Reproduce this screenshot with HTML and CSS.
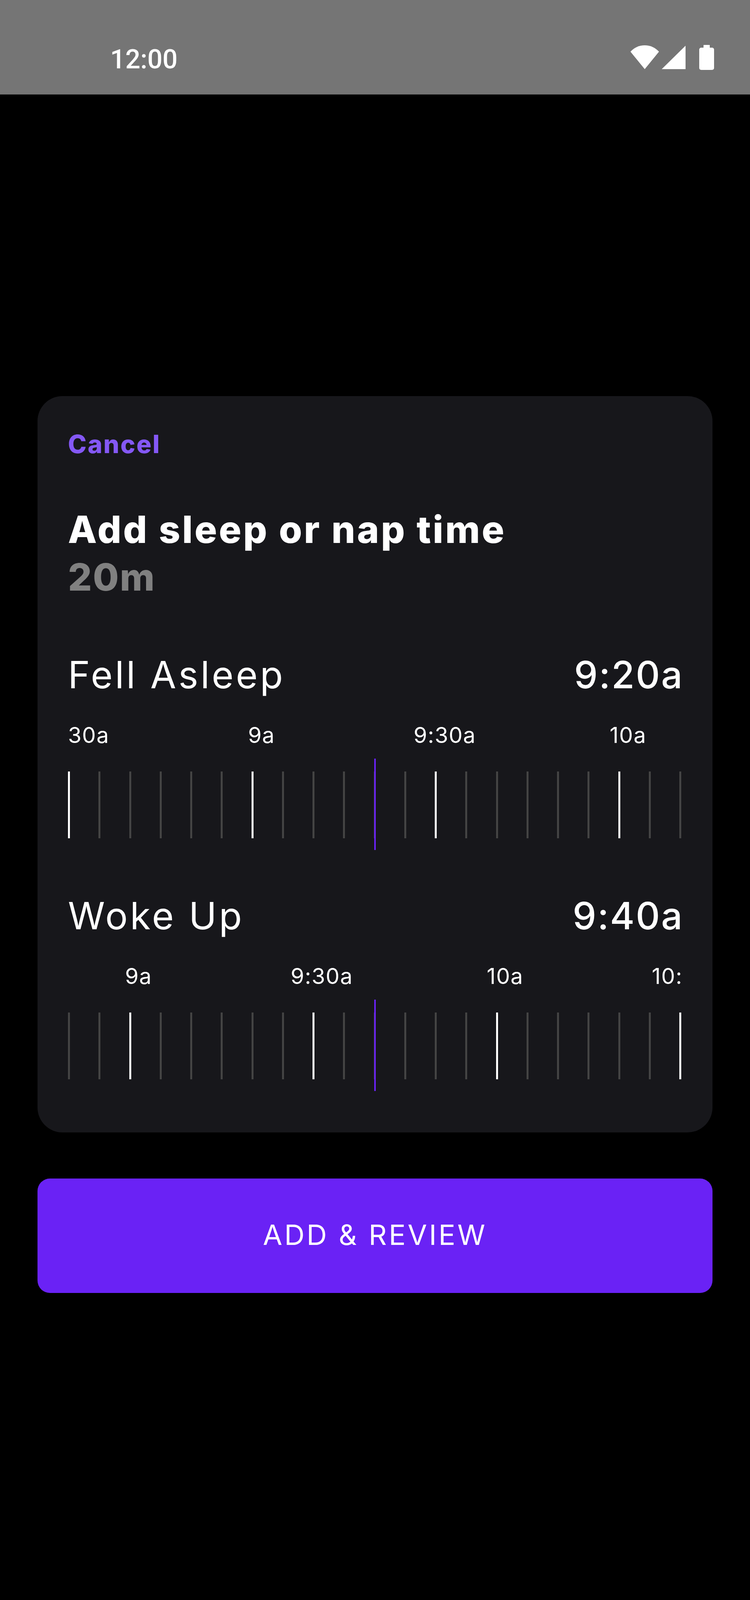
FILE: index.html
```html
<!DOCTYPE html>
<html lang="en">
<head>
<meta charset="utf-8">
<title>Add sleep or nap time</title>
<link rel="stylesheet" href="styles.css">
</head>
<body>
<header class="status">
  <span class="status-time">12:00</span>
  <div class="status-icons">
    <svg class="icon-wifi" width="73" height="65" viewBox="0 0 73 65"><path d="M0 17.3A49 49 0 0 1 73 17.3L36.5 62Z" fill="#fff"/></svg>
    <svg class="icon-signal" width="61" height="65" viewBox="0 0 61 65"><path d="M0 62L61 2V62Z" fill="#fff"/></svg>
    <svg class="icon-battery" width="38" height="65" viewBox="0 0 38 65"><path d="M12 0H26A1 1 0 0 1 27 1V7H33A5 5 0 0 1 38 12V59A5 5 0 0 1 33 64H5A5 5 0 0 1 0 59V12A5 5 0 0 1 5 7H11V1A1 1 0 0 1 12 0Z" fill="#fff"/></svg>
  </div>
</header>
<main class="content">
  <section class="card">
    <a class="cancel">Cancel</a>
    <h1 class="title">Add sleep or nap time</h1>
    <p class="duration">20m</p>

    <div class="section">
      <div class="row-head"><span class="row-name">Fell Asleep</span><span class="row-time">9:20a</span></div>
      <div class="labels labels-a">
        <span class="label label-first">30a</span>
        <span class="label">9a</span>
        <span class="label">9:30a</span>
        <span class="label">10a</span>
      </div>
      <div class="ticks">
        <i class="tick major"></i><i class="tick"></i><i class="tick"></i><i class="tick"></i><i class="tick"></i><i class="tick"></i>
        <i class="tick major"></i><i class="tick"></i><i class="tick"></i><i class="tick"></i><i class="tick"></i><i class="tick"></i>
        <i class="tick major"></i><i class="tick"></i><i class="tick"></i><i class="tick"></i><i class="tick"></i><i class="tick"></i>
        <i class="tick major"></i><i class="tick"></i><i class="tick"></i>
        <b class="needle"></b>
      </div>
    </div>

    <div class="section">
      <div class="row-head"><span class="row-name">Woke Up</span><span class="row-time">9:40a</span></div>
      <div class="labels labels-b">
        <span class="label">9a</span>
        <span class="label">9:30a</span>
        <span class="label">10a</span>
        <span class="label label-last">10:</span>
      </div>
      <div class="ticks">
        <i class="tick"></i><i class="tick"></i>
        <i class="tick major"></i><i class="tick"></i><i class="tick"></i><i class="tick"></i><i class="tick"></i><i class="tick"></i>
        <i class="tick major"></i><i class="tick"></i><i class="tick"></i><i class="tick"></i><i class="tick"></i><i class="tick"></i>
        <i class="tick major"></i><i class="tick"></i><i class="tick"></i><i class="tick"></i><i class="tick"></i><i class="tick"></i>
        <i class="tick major"></i>
        <b class="needle"></b>
      </div>
    </div>
  </section>
  <button class="cta">ADD &amp; REVIEW</button>
</main>
<div class="home-bar"></div>
</body>
</html>
```
FILE: styles.css
```css
* { box-sizing: border-box; }
html, body { margin: 0; padding: 0; }
body {
  width: 1920px;
  height: 4160px;
  overflow: hidden;
  background: #000;
  color: #fff;
  font-family: "Inter", "Liberation Sans", sans-serif;
}

/* status bar */
.status {
  display: flex;
  justify-content: space-between;
  align-items: flex-start;
  height: 242px;
  padding: 0 92px 0 282px;
  background: #757575;
  border-bottom: 1px solid #666;
}
.status-time {
  margin-top: 112px;
  font-family: "Roboto", sans-serif;
  font-weight: 500;
  font-size: 68px;
  line-height: 80px;
}
.status-icons {
  display: flex;
  margin-top: 115px;
}
.status-icons svg { display: block; }
.icon-signal { margin-left: 7px; }
.icon-battery { margin-left: 35px; }

/* layout */
.content {
  display: flex;
  flex-direction: column;
  padding: 772px 96px 0;
}

/* card */
.card {
  height: 1885px;
  padding: 83px 80px 0 78px;
  background: #17171b;
  border-radius: 64px;
}
.cancel {
  display: block;
  font-size: 64px;
  line-height: 80px;
  font-weight: 800;
  letter-spacing: 2.8px;
  color: #8458f5;
}
.title {
  margin: 117px 0 0;
  font-size: 96px;
  line-height: 122px;
  font-weight: 800;
  letter-spacing: 4.6px;
  color: #fff;
}
.duration {
  margin: 0;
  font-size: 96px;
  line-height: 122px;
  font-weight: 800;
  letter-spacing: 2.6px;
  color: #808080;
}

/* time rows */
.section { margin-top: 128px; }
.section + .section { margin-top: 137px; }
.row-head {
  display: flex;
  justify-content: space-between;
  font-size: 96px;
  line-height: 122px;
}
.row-name {
  font-weight: 400;
  letter-spacing: 5.7px;
}
.row-time {
  margin-right: -6px;
  font-weight: 500;
  letter-spacing: 3px;
}

/* ruler labels */
.labels {
  display: flex;
  height: 72px;
  margin-top: 58px;
  font-size: 56px;
  line-height: 72px;
  letter-spacing: 1.5px;
  white-space: nowrap;
}
.label {
  flex: 0 0 469.2px;
  text-align: center;
}
.label-first {
  flex-basis: 258px;
  padding-right: 155px;
  text-align: right;
}
.labels-b .label:first-child { margin-left: -54px; }
.label-last {
  flex: 1 1 auto;
  padding-left: 141px;
  text-align: left;
}

/* ruler ticks */
.ticks {
  position: relative;
  display: flex;
  justify-content: space-between;
  height: 171px;
  margin-top: 57px;
}
.tick {
  display: block;
  width: 5px;
  background: #444;
}
.tick.major { background: #fff; }
.needle {
  position: absolute;
  top: -33px;
  left: 784px;
  width: 4px;
  height: 234px;
  background: #6a22f5;
}

/* button */
.cta {
  display: flex;
  align-items: center;
  justify-content: center;
  height: 293px;
  margin: 118px 0 0;
  padding: 0 0 6px;
  border: 0;
  border-radius: 32px;
  background: #6a22f5;
  color: #fff;
  font-family: inherit;
  font-size: 72px;
  font-weight: 400;
  letter-spacing: 5.05px;
  line-height: 90px;
}

/* gesture bar */
.home-bar {
  width: 352px;
  height: 11px;
  margin: 809px auto 0;
  border-radius: 6px;
  background: #e8e6ea;
}
```
